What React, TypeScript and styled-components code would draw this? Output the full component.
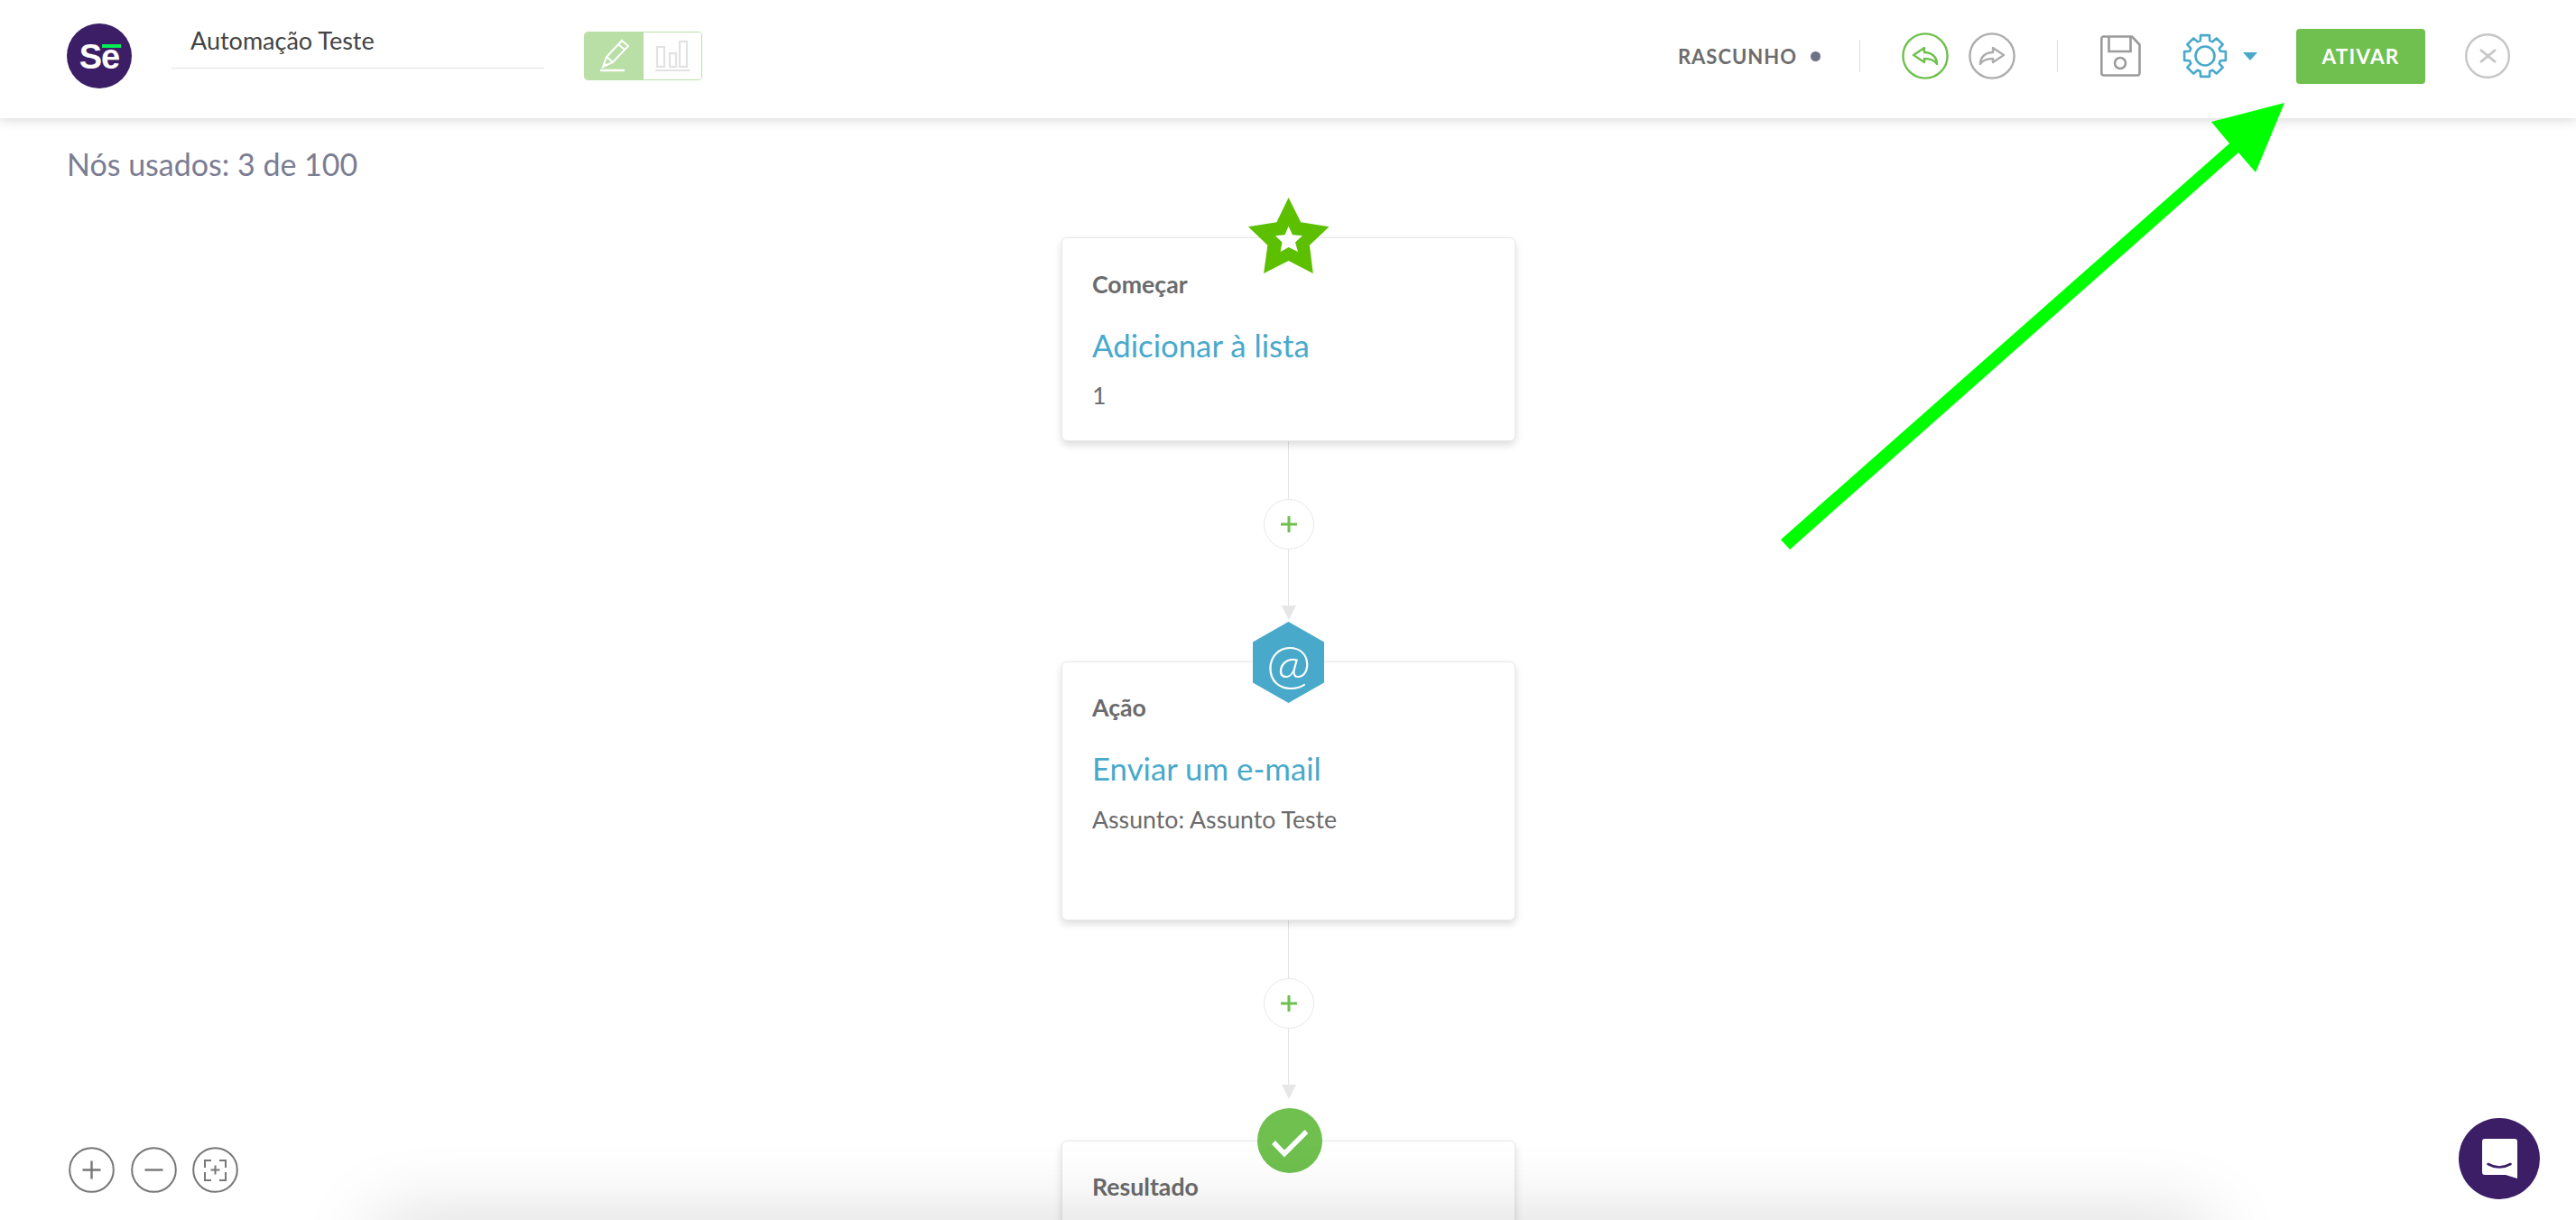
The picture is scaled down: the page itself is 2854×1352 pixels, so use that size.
import React from "react";
import styled, { createGlobalStyle } from "styled-components";

const GlobalStyle = createGlobalStyle`
  html, body { margin: 0; padding: 0; background: #fff; }
  body { font-family: "Lato", "Open Sans", sans-serif; color: #6b6b6b; }
`;

const PURPLE = "#3b1e66";
const GREEN = "#6fc04e";
const BLUE = "#48a9cb";

const Page = styled.div`
  position: relative;
  width: 2854px;
  height: 1352px;
  overflow: hidden;
  background: #fff;
`;

const Header = styled.header`
  box-sizing: border-box;
  height: 131px;
  padding: 0 73px 7px 74px;
  display: flex;
  align-items: center;
  justify-content: space-between;
  background: #fff;
  box-shadow: 0 2px 12px rgba(0, 0, 0, 0.16);
  position: relative;
  z-index: 2;
`;

const HeaderLeft = styled.div`
  display: flex;
  align-items: center;
`;

const HeaderRight = styled.div`
  display: flex;
  align-items: center;
`;

const Logo = styled.div`
  position: relative;
  width: 72px;
  height: 72px;
  border-radius: 50%;
  background: ${PURPLE};
  color: #fff;
  font-family: "Liberation Sans", Arial, sans-serif;
  font-weight: 700;
  font-size: 38px;
  letter-spacing: -1px;
  display: flex;
  align-items: center;
  justify-content: center;
  padding-top: 2px;
  box-sizing: border-box;
  &::after {
    content: "";
    position: absolute;
    left: 39px;
    top: 23px;
    width: 21px;
    height: 4px;
    background: #00ee55;
  }
`;

const TitleField = styled.div`
  box-sizing: border-box;
  width: 413px;
  height: 44px;
  margin: -16px 0 0 44px;
  padding-left: 21px;
  border-bottom: 1px solid #e4e4e4;
  font-size: 27px;
  line-height: 25px;
  color: #444;
`;

const Toggle = styled.div`
  display: flex;
  width: 131px;
  height: 54px;
  margin-left: 44px;
  box-sizing: border-box;
  border: 1px solid #b9dfa6;
  border-radius: 4px;
  overflow: hidden;
`;

const ToggleCell = styled.div<{ $active?: boolean }>`
  flex: ${(p) => (p.$active ? "0 0 65px" : "1")};
  background: ${(p) => (p.$active ? "#b9dfa6" : "#fff")};
  svg { display: block; }
`;

const Status = styled.div`
  font-size: 22px;
  font-weight: 700;
  letter-spacing: 1px;
  color: #6d6d6d;
  display: flex;
  align-items: center;
  gap: 15px;
  &::after {
    content: "";
    width: 11px;
    height: 11px;
    border-radius: 50%;
    background: #6f7188;
  }
`;

const Divider = styled.div<{ $ml: number; $mr: number }>`
  width: 1px;
  height: 36px;
  background: #dedede;
  margin: 0 ${(p) => p.$mr}px 0 ${(p) => p.$ml}px;
`;

const HistoryGroup = styled.div`
  display: flex;
  gap: 22px;
`;

const IconBox = styled.div<{ $w: number; $ml?: number }>`
  width: ${(p) => p.$w}px;
  margin-left: ${(p) => p.$ml ?? 0}px;
  flex: none;
  svg { display: block; }
`;

const Caret = styled.div`
  width: 0;
  height: 0;
  margin-left: 17px;
  border-left: 8px solid transparent;
  border-right: 8px solid transparent;
  border-top: 9px solid ${BLUE};
`;

const ActivateButton = styled.button`
  width: 143px;
  height: 61px;
  margin-left: 43px;
  padding: 0;
  border: 0;
  border-radius: 4px;
  background: ${GREEN};
  color: #fff;
  font-family: inherit;
  font-size: 22.5px;
  font-weight: 700;
  letter-spacing: 1.2px;
`;

const UsageText = styled.div`
  padding: 31px 0 1px 74px;
  font-size: 34px;
  line-height: 40px;
  color: #7b7d93;
`;

const Flow = styled.main`
  display: flex;
  flex-direction: column;
  align-items: center;
  padding: 60px 0 0 1px;
`;

const Card = styled.section<{ $h: number; $pt: number }>`
  position: relative;
  box-sizing: border-box;
  flex: none;
  width: 503px;
  height: ${(p) => p.$h}px;
  padding: ${(p) => p.$pt}px 33px 0;
  background: #fff;
  border: 1px solid #e8e8e8;
  border-radius: 6px;
  box-shadow: 0 4px 9px rgba(0, 0, 0, 0.14);
`;

const CardLabel = styled.div`
  font-size: 26.7px;
  line-height: 32px;
  font-weight: 700;
  color: #6b6b6b;
`;

const CardTitle = styled.div`
  margin-top: 32px;
  font-size: 34.8px;
  line-height: 40px;
  color: ${BLUE};
`;

const CardDetail = styled.div<{ $mt: number }>`
  margin-top: ${(p) => p.$mt}px;
  font-size: 26.7px;
  line-height: 32px;
  color: #6b6b6b;
`;

const StarBadge = styled.svg`
  position: absolute;
  left: 206px;
  top: -45px;
  width: 90px;
  height: 85px;
`;

const HexBadge = styled.div`
  position: absolute;
  left: 211px;
  top: -45px;
  width: 79px;
  height: 90px;
  background: ${BLUE};
  clip-path: polygon(50% 0, 100% 25%, 100% 75%, 50% 100%, 0 75%, 0 25%);
  color: #fff;
  font-size: 60px;
  font-weight: 300;
  display: flex;
  align-items: center;
  justify-content: center;
`;

const CheckBadge = styled.svg`
  position: absolute;
  left: 216px;
  top: -37px;
  width: 72px;
  height: 72px;
`;

const Link = styled.div<{ $h: number }>`
  width: 1px;
  height: ${(p) => p.$h}px;
  background: #e2e2e2;
  flex: none;
`;

const AddNode = styled.div`
  box-sizing: border-box;
  width: 56px;
  height: 56px;
  flex: none;
  border: 1px solid #e8e8e8;
  border-radius: 50%;
  display: flex;
  align-items: center;
  justify-content: center;
`;

const ArrowHead = styled.div`
  flex: none;
  width: 0;
  height: 0;
  margin-bottom: 46px;
  border-left: 8px solid transparent;
  border-right: 8px solid transparent;
  border-top: 16px solid #e6e6e6;
`;

const ZoomControls = styled.div`
  position: absolute;
  left: 76px;
  bottom: 30px;
  display: flex;
  gap: 17.5px;
  z-index: 3;
  svg { display: block; }
`;

const ChatButton = styled.svg`
  position: absolute;
  right: 40px;
  bottom: 23px;
  width: 90px;
  height: 90px;
  z-index: 3;
`;

const BottomShade = styled.div`
  position: absolute;
  left: 420px;
  right: 410px;
  top: 1354px;
  height: 60px;
  box-shadow: 0 0 86px rgba(0, 0, 0, 0.18);
  z-index: 1;
`;

const Annotation = styled.svg`
  position: absolute;
  left: 0;
  top: 0;
  width: 2854px;
  height: 1352px;
  pointer-events: none;
  z-index: 4;
`;

const gearPath = (() => {
  const cx = 25, cy = 25, ro = 23.4, ri = 17.8;
  const teeth = 8;
  const pts: string[] = [];
  for (let i = 0; i < teeth; i++) {
    const a = (i * 2 * Math.PI) / teeth - Math.PI / 2;
    const d = 0.21, e = 0.3;
    const pairs: [number, number][] = [
      [a - e, ri],
      [a - d, ro],
      [a + d, ro],
      [a + e, ri],
    ];
    pairs.forEach(([t, r]) => pts.push(`${(cx + r * Math.cos(t)).toFixed(2)} ${(cy + r * Math.sin(t)).toFixed(2)}`));
  }
  return `M${pts.join("L")}Z`;
})();

const PencilIcon = () => (
  <svg width="65" height="52" viewBox="0 0 65 52" fill="none" stroke="#fff" strokeWidth="2">
    <path d="M20 38l4-11L41 9l7 6-17 18z" />
    <path d="M37 13l7 6M24 27l7 6M21 34l3 3" />
    <path d="M17 42h27" strokeWidth="2.4" />
  </svg>
);

const BarsIcon = () => (
  <svg width="65" height="52" viewBox="0 0 65 52" fill="none" stroke="#e2e2e2" strokeWidth="2.2">
    <rect x="15" y="16" width="8" height="22" />
    <rect x="29" y="23" width="7" height="15" />
    <rect x="40" y="10" width="8" height="28" />
    <path d="M13 42h38" />
  </svg>
);

const HistoryIcon = ({ color, flip }: { color: string; flip?: boolean }) => (
  <svg width="52" height="52" viewBox="0 0 52 52" fill="none" stroke={color} strokeWidth="2.4">
    <circle cx="26" cy="26" r="24.6" />
    <path
      transform={flip ? "matrix(-1 0 0 1 52 0)" : undefined}
      d="M13 25l12-8v5c8 0 14 5 14 13-3-5-8-6-14-6v4z"
      strokeLinejoin="round"
    />
  </svg>
);

const SaveIcon = () => (
  <svg width="45" height="46" viewBox="0 0 45 46" fill="none" stroke="#9b9b9b" strokeWidth="2.6">
    <path d="M3 1.500h32l8.500 9V42a2.500 2.500 0 0 1-2.500 2.500H3.500A2.500 2.500 0 0 1 1.300 42V4A2.500 2.500 0 0 1 3 1.500z" strokeLinejoin="round" />
    <path d="M9.500 1.500V18h24V1.500" />
    <circle cx="22" cy="31" r="6" />
  </svg>
);

const GearIcon = () => (
  <svg width="50" height="50" viewBox="0 0 50 50" fill="none" stroke={BLUE} strokeWidth="2.6" strokeLinejoin="round">
    <path d={gearPath} />
    <circle cx="25" cy="25" r="10.500" />
  </svg>
);

const CloseIcon = () => (
  <svg width="50" height="50" viewBox="0 0 50 50" fill="none" stroke="#c6c6c6" strokeWidth="2.4">
    <circle cx="25" cy="25" r="23.800" />
    <path d="M17 18l17 14M34 18L17 32" strokeWidth="2.800" />
  </svg>
);

const PlusIcon = () => (
  <svg width="20" height="20" viewBox="0 0 20 20" stroke={GREEN} strokeWidth="3">
    <path d="M1 10h18M10 1v18" />
  </svg>
);

const ZoomIcon = ({ children }: { children: React.ReactNode }) => (
  <svg width="51" height="51" viewBox="0 0 51 51" fill="none" stroke="#777" strokeWidth="2">
    <circle cx="25.500" cy="25.500" r="24.300" />
    {children}
  </svg>
);

const Connector = () => (
  <>
    <Link $h={64} />
    <AddNode>
      <PlusIcon />
    </AddNode>
    <Link $h={62} />
    <ArrowHead />
  </>
);

export default function App() {
  return (
    <Page>
      <GlobalStyle />
      <Header>
        <HeaderLeft>
          <Logo>Se</Logo>
          <TitleField>Automação Teste</TitleField>
          <Toggle>
            <ToggleCell $active>
              <PencilIcon />
            </ToggleCell>
            <ToggleCell>
              <BarsIcon />
            </ToggleCell>
          </Toggle>
        </HeaderLeft>
        <HeaderRight>
          <Status>RASCUNHO</Status>
          <Divider $ml={43} $mr={46} />
          <HistoryGroup>
            <HistoryIcon color={GREEN} />
            <HistoryIcon color="#adadad" flip />
          </HistoryGroup>
          <Divider $ml={46} $mr={47} />
          <IconBox $w={45}>
            <SaveIcon />
          </IconBox>
          <IconBox $w={50} $ml={46}>
            <GearIcon />
          </IconBox>
          <Caret />
          <ActivateButton>ATIVAR</ActivateButton>
          <IconBox $w={50} $ml={44}>
            <CloseIcon />
          </IconBox>
        </HeaderRight>
      </Header>

      <UsageText>Nós usados: 3 de 100</UsageText>

      <Flow>
        <Card $h={226} $pt={35}>
          <StarBadge viewBox="0 0 90 85">
            <polygon
              fill="#5cbf00"
              points="44.6,0 58.2,27.300 89.600,32.300 67.900,52.700 71.800,84 44.600,70 17.100,84 21.400,52.700 0,32.300 31.400,27.300"
            />
            <polygon
              fill="#fff"
              points="44.600,31.700 49,41.300 60,42.300 52,49.500 55,60 44.600,55 35.700,60 37.500,49.500 30,42.300 40.500,41.300"
            />
          </StarBadge>
          <CardLabel>Começar</CardLabel>
          <CardTitle>Adicionar à lista</CardTitle>
          <CardDetail $mt={19}>1</CardDetail>
        </Card>
        <Connector />
        <Card $h={287} $pt={34}>
          <HexBadge>@</HexBadge>
          <CardLabel>Ação</CardLabel>
          <CardTitle>Enviar um e-mail</CardTitle>
          <CardDetail $mt={20}>Assunto: Assunto Teste</CardDetail>
        </Card>
        <Connector />
        <Card $h={226} $pt={34}>
          <CheckBadge viewBox="0 0 72 72">
            <circle cx="36" cy="36" r="36" fill={GREEN} />
            <path d="M18 38l12 12.500L54.500 26" fill="none" stroke="#fff" strokeWidth="5.500" />
          </CheckBadge>
          <CardLabel>Resultado</CardLabel>
        </Card>
      </Flow>

      <BottomShade />

      <ZoomControls>
        <ZoomIcon>
          <path d="M15.500 25.500h20M25.500 15.500v20" strokeWidth="2.400" />
        </ZoomIcon>
        <ZoomIcon>
          <path d="M15.500 25.500h20" strokeWidth="2.400" />
        </ZoomIcon>
        <ZoomIcon>
          <path d="M21 15h-7v8M30 15h7v8M14 28v9h7M37 28v9h-7M20.500 25.500h10M25.500 20.500v10" />
        </ZoomIcon>
      </ZoomControls>

      <ChatButton viewBox="0 0 90 90">
        <circle cx="45" cy="45" r="45" fill={PURPLE} />
        <path
          d="M29 23h33a3 3 0 0 1 3 3v41l-13-4H29a3 3 0 0 1-3-3V26a3 3 0 0 1 3-3z"
          fill="#fff"
        />
        <path d="M32.500 51q12.500 7 25 0" fill="none" stroke={PURPLE} strokeWidth="2.600" strokeLinecap="round" />
      </ChatButton>

      <Annotation viewBox="0 0 2854 1352">
        <polygon fill="#00ff00" points="1973,598 1983,609 2480,169 2499,191 2531,114 2450,135 2470,159" />
      </Annotation>
    </Page>
  );
}
